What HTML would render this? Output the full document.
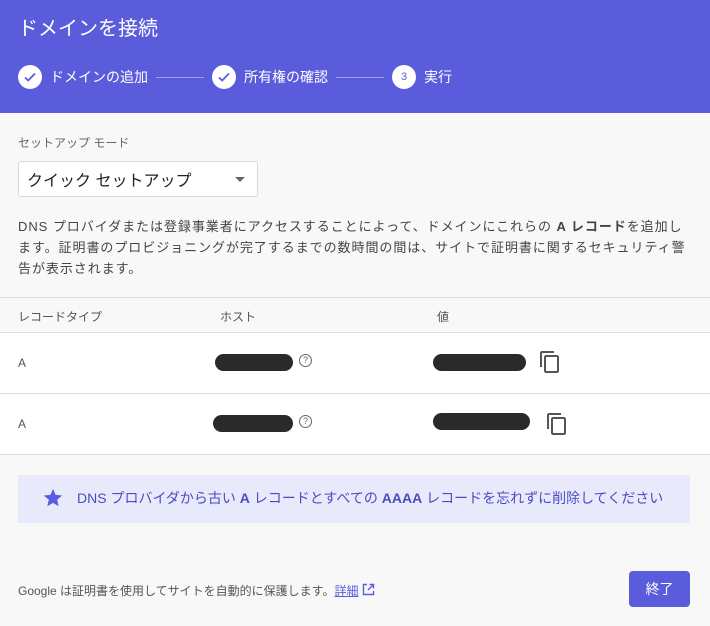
<!DOCTYPE html>
<html><head><meta charset="utf-8"><style>
*{margin:0;padding:0;box-sizing:border-box}
body{width:710px;height:626px;background:#f8f8f8;font-family:"Liberation Sans","Noto Sans CJK JP",sans-serif;position:relative;overflow:hidden;color:#333}
.hdr{position:absolute;left:0;top:0;width:710px;height:113px;background:#5a5cdb;color:#fff}
.t{position:absolute;left:18px;top:12px;font-size:20px}
.st{position:absolute;top:65px;height:24px;display:flex;align-items:center;font-size:14px}
.c{width:24px;height:24px;border-radius:50%;background:#fff;display:flex;align-items:center;justify-content:center;color:#5a5cdb;font-size:11px;margin-right:8px}
.ln{position:absolute;top:77px;height:1px;background:#9fa0ec}
.abs{position:absolute}
.sel{left:18px;top:161px;width:240px;height:36px;background:#fff;border:1px solid #d8d8d8;border-radius:3px;font-size:16px;padding:5px 8px;color:#222}
.p{left:18px;top:216px;width:700px;font-size:13px;line-height:21px;color:#444;white-space:nowrap;letter-spacing:0.95px}
.row{left:0;width:710px;background:#fff;border-top:1px solid #ddd}
.th{font-size:12px;color:#555}
.blob{background:#2a2a2a;border-radius:10px;height:17px}
.q{width:13px;height:13px;border:1.2px solid #666;border-radius:50%;font-size:9px;text-align:center;line-height:11px;color:#666}
</style></head><body>
<div class="hdr">
<div class="t">ドメインを接続</div>
<div class="st" style="left:18px"><div class="c"><svg width="14" height="14" viewBox="0 0 14 14"><path d="M2 7.5l3.2 3L12 3.5" stroke="#5a5cdb" stroke-width="1.8" fill="none"/></svg></div>ドメインの追加</div>
<div class="ln" style="left:156px;width:48px"></div>
<div class="st" style="left:212px"><div class="c"><svg width="14" height="14" viewBox="0 0 14 14"><path d="M2 7.5l3.2 3L12 3.5" stroke="#5a5cdb" stroke-width="1.8" fill="none"/></svg></div>所有権の確認</div>
<div class="ln" style="left:336px;width:48px"></div>
<div class="st" style="left:392px"><div class="c">3</div>実行</div>
</div>
<div class="abs" style="left:18px;top:134px;font-size:12px;color:#666">セットアップ モード</div>
<div class="abs sel">クイック セットアップ<svg class="abs" style="left:216px;top:15px" width="10" height="5"><path d="M0 0h10L5 5z" fill="#666"/></svg></div>
<div class="abs p">DNS プロバイダまたは登録事業者にアクセスすることによって、ドメインにこれらの <b>A レコード</b>を追加し<br>ます。証明書のプロビジョニングが完了するまでの数時間の間は、サイトで証明書に関するセキュリティ警<br>告が表示されます。</div>
<div class="abs" style="left:0;top:297px;width:710px;border-top:1px solid #e0e0e0"></div>
<div class="abs th" style="left:18px;top:308px">レコードタイプ</div>
<div class="abs th" style="left:220px;top:308px">ホスト</div>
<div class="abs th" style="left:437px;top:308px">値</div>
<div class="abs row" style="top:332px;height:61px"></div>
<div class="abs row" style="top:393px;height:62px;border-bottom:1px solid #ddd"></div>
<div class="abs th" style="left:18px;top:356px">A</div>
<div class="abs th" style="left:18px;top:417px">A</div>
<div class="abs blob" style="left:215px;top:354px;width:78px"></div>
<div class="abs q" style="left:299px;top:354px">?</div>
<div class="abs blob" style="left:433px;top:354px;width:93px"></div>
<svg class="abs" style="left:538px;top:350px" width="24" height="24" viewBox="0 0 24 24"><path d="M16 1H4c-1.1 0-2 .9-2 2v14h2V3h12V1zm3 4H8c-1.1 0-2 .9-2 2v14c0 1.1.9 2 2 2h11c1.1 0 2-.9 2-2V7c0-1.1-.9-2-2-2zm0 16H8V7h11v14z" fill="#555"/></svg>
<div class="abs blob" style="left:213px;top:415px;width:80px"></div>
<div class="abs q" style="left:299px;top:415px">?</div>
<div class="abs blob" style="left:433px;top:413px;width:97px"></div>
<svg class="abs" style="left:545px;top:412px" width="24" height="24" viewBox="0 0 24 24"><path d="M16 1H4c-1.1 0-2 .9-2 2v14h2V3h12V1zm3 4H8c-1.1 0-2 .9-2 2v14c0 1.1.9 2 2 2h11c1.1 0 2-.9 2-2V7c0-1.1-.9-2-2-2zm0 16H8V7h11v14z" fill="#555"/></svg>
<div class="abs" style="left:18px;top:475px;width:672px;height:48px;background:#e8eafc"></div>
<svg class="abs" style="left:42px;top:487px" width="22" height="22" viewBox="0 0 24 24"><path d="M12 17.27L18.18 21l-1.64-7.03L22 9.24l-7.19-.61L12 2 9.19 8.63 2 9.24l5.46 4.73L5.82 21z" fill="#5a5cdb"/></svg>
<div class="abs" style="left:77px;top:488px;font-size:14px;color:#4a4cc0;white-space:nowrap">DNS プロバイダから古い <b>A</b> レコードとすべての <b>AAAA</b> レコードを忘れずに削除してください</div>
<div class="abs" style="left:18px;top:582px;font-size:12px;color:#555">Google は証明書を使用してサイトを自動的に保護します。<span style="color:#5a5cdb;text-decoration:underline">詳細</span></div>
<svg class="abs" style="left:362px;top:583px" width="13" height="13" viewBox="0 0 13 13"><path d="M5 1.5H1.5v10h10V8M7.5 1.5h4v4M11.5 1.5L6 7" stroke="#5a5cdb" stroke-width="1.4" fill="none"/></svg>
<div class="abs" style="left:629px;top:571px;width:61px;height:36px;background:#5a5cdb;border-radius:4px;color:#fff;font-size:14px;text-align:center;line-height:36px">終了</div>
</body></html>
